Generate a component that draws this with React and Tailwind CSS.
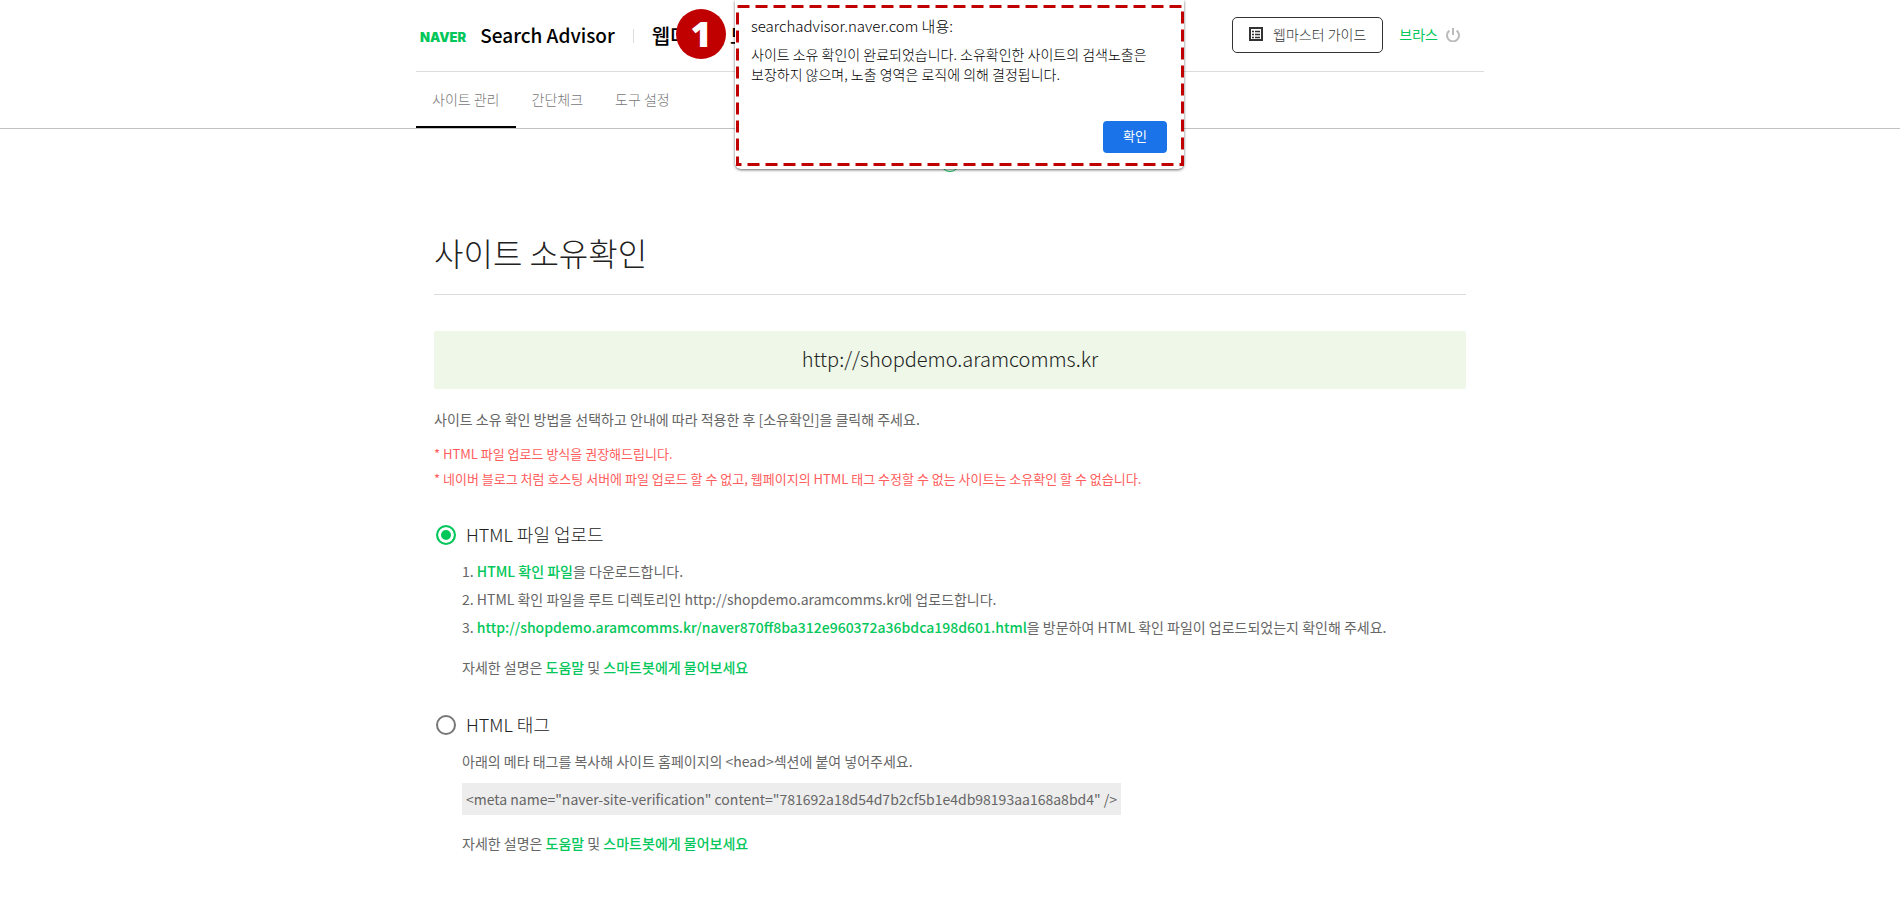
import { useState } from 'react'

const TABS = ['사이트 관리', '간단체크', '도구 설정']

const SITE_URL = 'http://shopdemo.aramcomms.kr'
const FILE_URL = `${SITE_URL}/naver870ff8ba312e960372a36bdca198d601.html`
const META_TAG = '<meta name="naver-site-verification" content="781692a18d54d7b2cf5b1e4db98193aa168a8bd4" />'

function GuideIcon() {
  return (
    <svg viewBox="0 0 14 14" className="w-3.5 h-3.5" aria-hidden="true">
      <rect x="1" y="1" width="12" height="12" fill="none" stroke="#333" strokeWidth="2" />
      <path d="M3 4.5h2M3 7.5h2M3 10.5h2M6 4.5h5M6 7.5h5M6 10.5h5" stroke="#333" strokeWidth="1.6" />
    </svg>
  )
}

function PowerIcon() {
  return (
    <svg viewBox="0 0 14 14" className="w-3.5 h-3.5" fill="none" stroke="currentColor" strokeWidth="2" aria-hidden="true">
      <path d="M7 0v7M3.4 2.6a6 6 0 1 0 7.2 0" />
    </svg>
  )
}

function GreenLink({ children }) {
  return (
    <a href="#" className="font-medium text-[#03c75a]">
      {children}
    </a>
  )
}

function Header() {
  return (
    <header className="border-b border-[#c1c1c1]">
      <div className="max-w-[1068px] mx-auto">
        <div className="flex items-center justify-between h-[72px] pl-1 pr-6 pb-0.5 border-b border-[#dcdcdc]">
          <div className="flex items-center pt-0.5">
            <a href="#" className="mt-1 font-['Inter'] text-[13px] font-black text-[#03c75a]">NAVER</a>
            <a href="#" className="ml-3.5 text-[19px] font-medium text-black">Search Advisor</a>
            <span className="ml-[18px] w-px h-3.5 bg-[#dcdcdc]" />
            <a href="#" className="ml-[18px] text-xl font-medium text-black">웹마스터 도구</a>
          </div>
          <div className="flex items-center">
            <button className="flex items-center gap-2.5 h-9 px-4 pb-0.5 rounded-[5px] border border-[#333] text-sm font-light text-[#333]">
              <GuideIcon />
              웹마스터 가이드
            </button>
            <a href="#" className="ml-4 pb-0.5 text-sm text-[#03c75a]">브라스</a>
            <button aria-label="로그아웃" className="ml-2 text-[#bbb]">
              <PowerIcon />
            </button>
          </div>
        </div>
        <nav className="flex h-14">
          {TABS.map((tab, i) => (
            <a
              key={tab}
              href="#"
              className={`flex items-center px-4 border-b-2 text-sm font-light text-[#777] ${i === 0 ? 'border-black' : 'border-transparent'}`}
            >
              {tab}
            </a>
          ))}
        </nav>
      </div>
    </header>
  )
}

function ConfirmDialog() {
  return (
    <div
      role="dialog"
      aria-label="searchadvisor.naver.com 내용"
      className="absolute top-0 left-1/2 -ml-[215px] w-[449px] h-[169px] rounded-b-md bg-white pl-4 pr-[17px] pt-4 pb-4 flex flex-col shadow-[0_1px_3px_rgba(0,0,0,0.6)]"
    >
      <svg className="absolute inset-0 w-full h-full overflow-visible pointer-events-none" aria-hidden="true">
        <rect x="2.5" y="6.5" width="445" height="158" fill="none" stroke="#c00000" strokeWidth="3" strokeDasharray="12 6" />
      </svg>
      <p className="text-[15px] leading-5 font-light text-black">searchadvisor.naver.com 내용:</p>
      <p className="mt-2 text-sm leading-5 font-light text-black whitespace-nowrap">
        사이트 소유 확인이 완료되었습니다. 소유확인한 사이트의 검색노출은
        <br />
        보장하지 않으며, 노출 영역은 로직에 의해 결정됩니다.
      </p>
      <button className="mt-auto self-end w-16 h-8 pb-0.5 rounded bg-[#1a73e8] text-[13px] text-white">확인</button>
      <span className="absolute top-[9px] -left-[59px] flex items-center justify-center w-[50px] h-[50px] rounded-full bg-[#c00000] font-['Open_Sans'] text-4xl font-extrabold text-white">
        1
      </span>
    </div>
  )
}

function Method({ id, title, checked, onSelect, children }) {
  return (
    <section className="mt-[30px]">
      <div className="flex items-center h-7">
        <input
          type="radio"
          id={id}
          name="method"
          checked={checked}
          onChange={onSelect}
          className="appearance-none ml-0.5 w-5 h-5 rounded-full border-2 border-[#777] checked:border-[#03c75a] checked:bg-[#03c75a] checked:shadow-[inset_0_0_0_3px_white]"
        />
        <label htmlFor={id} className="ml-2.5 pb-0.5 text-lg font-light text-[#222]">{title}</label>
      </div>
      <div className="ml-7 mt-2 text-sm leading-7 text-[#666]">{children}</div>
    </section>
  )
}

function Help() {
  return (
    <p className="mt-3">
      자세한 설명은 <GreenLink>도움말</GreenLink> 및 <GreenLink>스마트봇에게 물어보세요</GreenLink>
    </p>
  )
}

export default function App() {
  const [method, setMethod] = useState('file')

  return (
    <div className="relative min-h-screen bg-white font-['Noto_Sans_CJK_KR',sans-serif]">
      <Header />
      <main className="max-w-[1032px] mx-auto pb-10">
        <span className="block mx-auto mt-[23px] w-5 h-5 rounded-full border border-[#03c75a]" />
        <h1 className="mt-14 pb-[18px] text-[32px] leading-12 font-light text-[#222] border-b border-[#dcdcdc]">
          사이트 소유확인
        </h1>
        <div className="mt-9 flex items-center justify-center h-[58px] pb-0.5 rounded-xs bg-[#eef7e8] text-xl font-light text-[#222]">
          {SITE_URL}
        </div>
        <p className="mt-[18px] text-sm leading-6 text-[#666]">
          사이트 소유 확인 방법을 선택하고 안내에 따라 적용한 후 [소유확인]을 클릭해 주세요.
        </p>
        <div className="mt-2.5 text-[13px] leading-[25px] text-[#ff5c5c]">
          <p>* HTML 파일 업로드 방식을 권장해드립니다.</p>
          <p>* 네이버 블로그 처럼 호스팅 서버에 파일 업로드 할 수 없고, 웹페이지의 HTML 태그 수정할 수 없는 사이트는 소유확인 할 수 없습니다.</p>
        </div>

        <Method id="method-file" title="HTML 파일 업로드" checked={method === 'file'} onSelect={() => setMethod('file')}>
          <ol>
            <li>1. <GreenLink>HTML 확인 파일</GreenLink>을 다운로드합니다.</li>
            <li>2. HTML 확인 파일을 루트 디렉토리인 {SITE_URL}에 업로드합니다.</li>
            <li>3. <GreenLink>{FILE_URL}</GreenLink>을 방문하여 HTML 확인 파일이 업로드되었는지 확인해 주세요.</li>
          </ol>
          <Help />
        </Method>

        <Method id="method-tag" title="HTML 태그" checked={method === 'tag'} onSelect={() => setMethod('tag')}>
          <p>아래의 메타 태그를 복사해 사이트 홈페이지의 &lt;head&gt;섹션에 붙여 넣어주세요.</p>
          <p className="mt-2 mb-3.5 w-fit px-1 leading-8 bg-[#ededed]">{META_TAG}</p>
          <Help />
        </Method>
      </main>
      <ConfirmDialog />
    </div>
  )
}
